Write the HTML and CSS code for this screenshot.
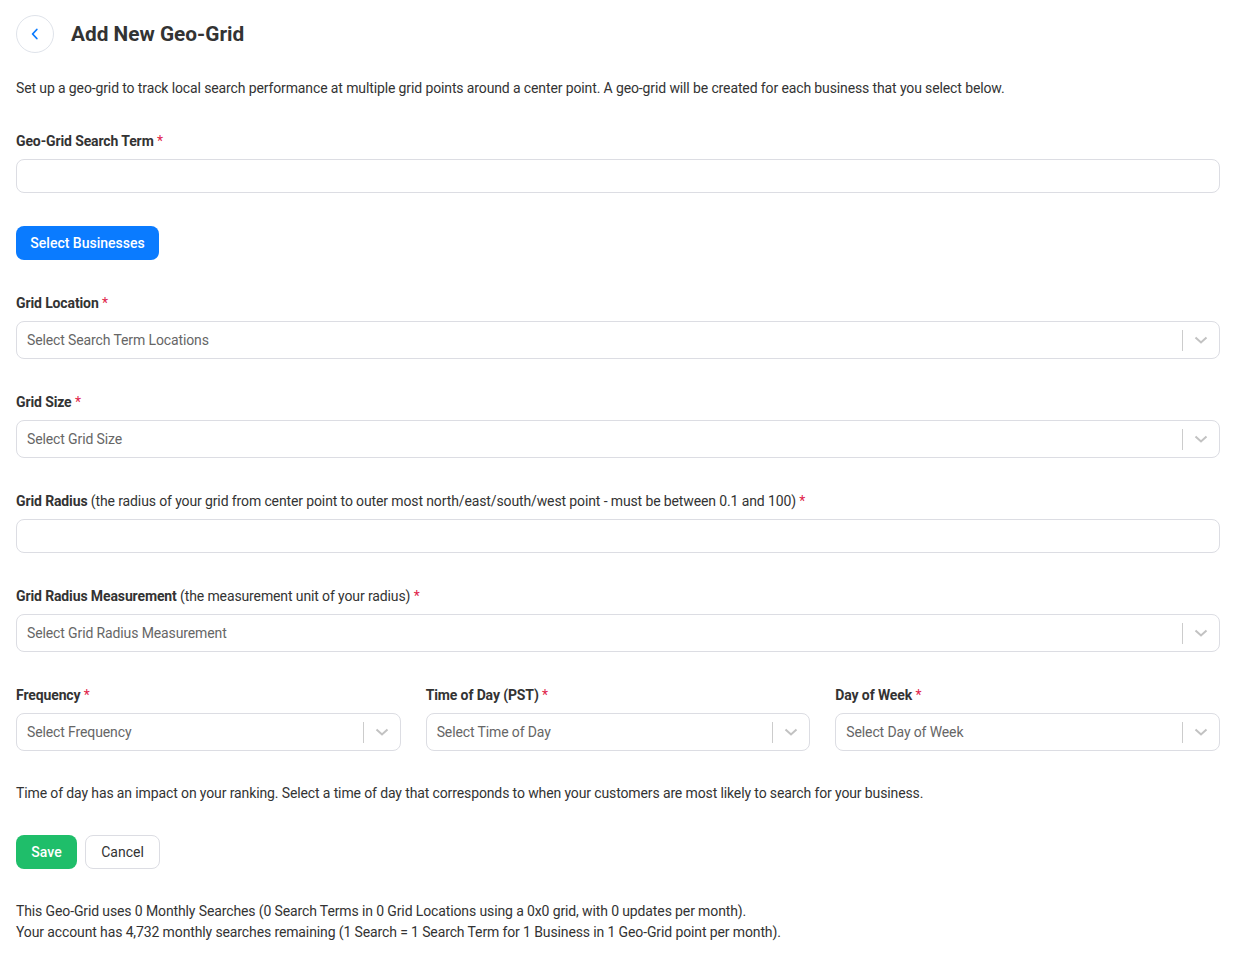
FILE: index.html
```html
<!DOCTYPE html>
<html>
<head>
<meta charset="utf-8">
<link rel="stylesheet" href="styles.css">
</head>
<body>
<div class="page">
  <div class="header">
    <button class="back">
      <svg width="12" height="12" viewBox="0 0 12 12"><path d="M7.8 1.5 L3.6 6 L7.8 10.5" fill="none" stroke="#0a7bff" stroke-width="1.8" stroke-linecap="round" stroke-linejoin="round"/></svg>
    </button>
    <h1>Add New Geo-Grid</h1>
  </div>
  <p class="intro">Set up a geo-grid to track local search performance at multiple grid points around a center point. A geo-grid will be created for each business that you select below.</p>

  <div class="group">
    <label class="label"><b>Geo-Grid Search Term</b> <span class="req">*</span></label>
    <input class="input" type="text">
  </div>

  <div class="group">
    <button class="btn btn-blue">Select Businesses</button>
  </div>

  <div class="group">
    <label class="label"><b>Grid Location</b> <span class="req">*</span></label>
    <div class="select"><span class="ph">Select Search Term Locations</span><span class="ind"><span class="sep"></span><svg width="20" height="20" viewBox="0 0 20 20"><path d="M4.5 7.5 L10 12.5 L15.5 7.5" fill="none" stroke="#c2c2c2" stroke-width="2"/></svg></span></div>
  </div>

  <div class="group">
    <label class="label"><b>Grid Size</b> <span class="req">*</span></label>
    <div class="select"><span class="ph">Select Grid Size</span><span class="ind"><span class="sep"></span><svg width="20" height="20" viewBox="0 0 20 20"><path d="M4.5 7.5 L10 12.5 L15.5 7.5" fill="none" stroke="#c2c2c2" stroke-width="2"/></svg></span></div>
  </div>

  <div class="group">
    <label class="label"><b>Grid Radius</b> (the radius of your grid from center point to outer most north/east/south/west point - must be between 0.1 and 100) <span class="req">*</span></label>
    <input class="input" type="text">
  </div>

  <div class="group">
    <label class="label"><b>Grid Radius Measurement</b> (the measurement unit of your radius) <span class="req">*</span></label>
    <div class="select"><span class="ph">Select Grid Radius Measurement</span><span class="ind"><span class="sep"></span><svg width="20" height="20" viewBox="0 0 20 20"><path d="M4.5 7.5 L10 12.5 L15.5 7.5" fill="none" stroke="#c2c2c2" stroke-width="2"/></svg></span></div>
  </div>

  <div class="row3">
    <div class="col">
      <label class="label"><b>Frequency</b> <span class="req">*</span></label>
      <div class="select"><span class="ph">Select Frequency</span><span class="ind"><span class="sep"></span><svg width="20" height="20" viewBox="0 0 20 20"><path d="M4.5 7.5 L10 12.5 L15.5 7.5" fill="none" stroke="#c2c2c2" stroke-width="2"/></svg></span></div>
    </div>
    <div class="col">
      <label class="label"><b>Time of Day (PST)</b> <span class="req">*</span></label>
      <div class="select"><span class="ph">Select Time of Day</span><span class="ind"><span class="sep"></span><svg width="20" height="20" viewBox="0 0 20 20"><path d="M4.5 7.5 L10 12.5 L15.5 7.5" fill="none" stroke="#c2c2c2" stroke-width="2"/></svg></span></div>
    </div>
    <div class="col">
      <label class="label"><b>Day of Week</b> <span class="req">*</span></label>
      <div class="select"><span class="ph">Select Day of Week</span><span class="ind"><span class="sep"></span><svg width="20" height="20" viewBox="0 0 20 20"><path d="M4.5 7.5 L10 12.5 L15.5 7.5" fill="none" stroke="#c2c2c2" stroke-width="2"/></svg></span></div>
    </div>
  </div>

  <p class="help">Time of day has an impact on your ranking. Select a time of day that corresponds to when your customers are most likely to search for your business.</p>

  <div class="actions">
    <button class="btn btn-green">Save</button>
    <button class="btn btn-outline">Cancel</button>
  </div>

  <p class="foot">This Geo-Grid uses 0 Monthly Searches (0 Search Terms in 0 Grid Locations using a 0x0 grid, with 0 updates per month).<br>Your account has 4,732 monthly searches remaining (1 Search = 1 Search Term for 1 Business in 1 Geo-Grid point per month).</p>
</div>
</body>
</html>
```

FILE: styles.css
```css
* { box-sizing: border-box; }
body {
  margin: 0;
  background: #fff;
  font-family: Roboto, "Liberation Sans", Arial, sans-serif;
  font-size: 14px;
  line-height: 20px;
  letter-spacing: -0.12px;
  color: #333;
}
.page {
  padding: 15px 17px 0 16px;
}
.header {
  display: flex;
  align-items: center;
  gap: 17px;
}
.back {
  width: 38px;
  height: 38px;
  border-radius: 50%;
  border: 1px solid #dfe3ea;
  background: #fff;
  display: flex;
  align-items: center;
  justify-content: center;
  padding: 0;
}
h1 {
  margin: 0;
  font-size: 20.8px;
  font-weight: 700;
  letter-spacing: 0;
  color: #333;
  line-height: 38px;
}
.intro {
  margin: 25px 0 33px;
}
.group {
  margin-bottom: 33px;
}
.label {
  display: block;
  margin-bottom: 8px;
}
.label b { font-weight: 700; }
.req { color: #e01e4a; }
.input {
  display: block;
  width: 100%;
  height: 34px;
  border: 1px solid #dcdde3;
  border-radius: 8px;
  background: #fff;
  font: inherit;
}
.select {
  display: flex;
  align-items: center;
  height: 38px;
  border: 1px solid #dcdde3;
  border-radius: 8px;
  background: #fff;
  padding-left: 10px;
}
.ph {
  flex: 1;
  color: #666;
}
.ind {
  display: flex;
  align-items: center;
  height: 100%;
}
.sep {
  width: 1px;
  height: 21px;
  background: #ccc;
}
.ind svg {
  margin: 0 8px;
}
.btn {
  font: inherit;
  height: 34px;
  border-radius: 8px;
  padding: 0 16px;
  cursor: pointer;
}
.btn-blue {
  background: #0a7bff;
  color: #fff;
  border: none;
  font-weight: 500;
  width: 143px;
  padding: 0;
}
.row3 {
  display: grid;
  grid-template-columns: 1fr 1fr 1fr;
  gap: 25px;
  margin-bottom: 32px;
}
.help {
  margin: 0 0 32px;
}
.actions {
  display: flex;
  gap: 8px;
  margin-bottom: 32px;
}
.btn-green {
  background: #1fbe6a;
  color: #fff;
  border: none;
  font-weight: 500;
  width: 61px;
  padding: 0;
}
.btn-outline {
  background: #fff;
  color: #333;
  border: 1px solid #dcdde3;
  width: 75px;
  padding: 0;
}
.foot {
  margin: 0;
  line-height: 21px;
}
```
